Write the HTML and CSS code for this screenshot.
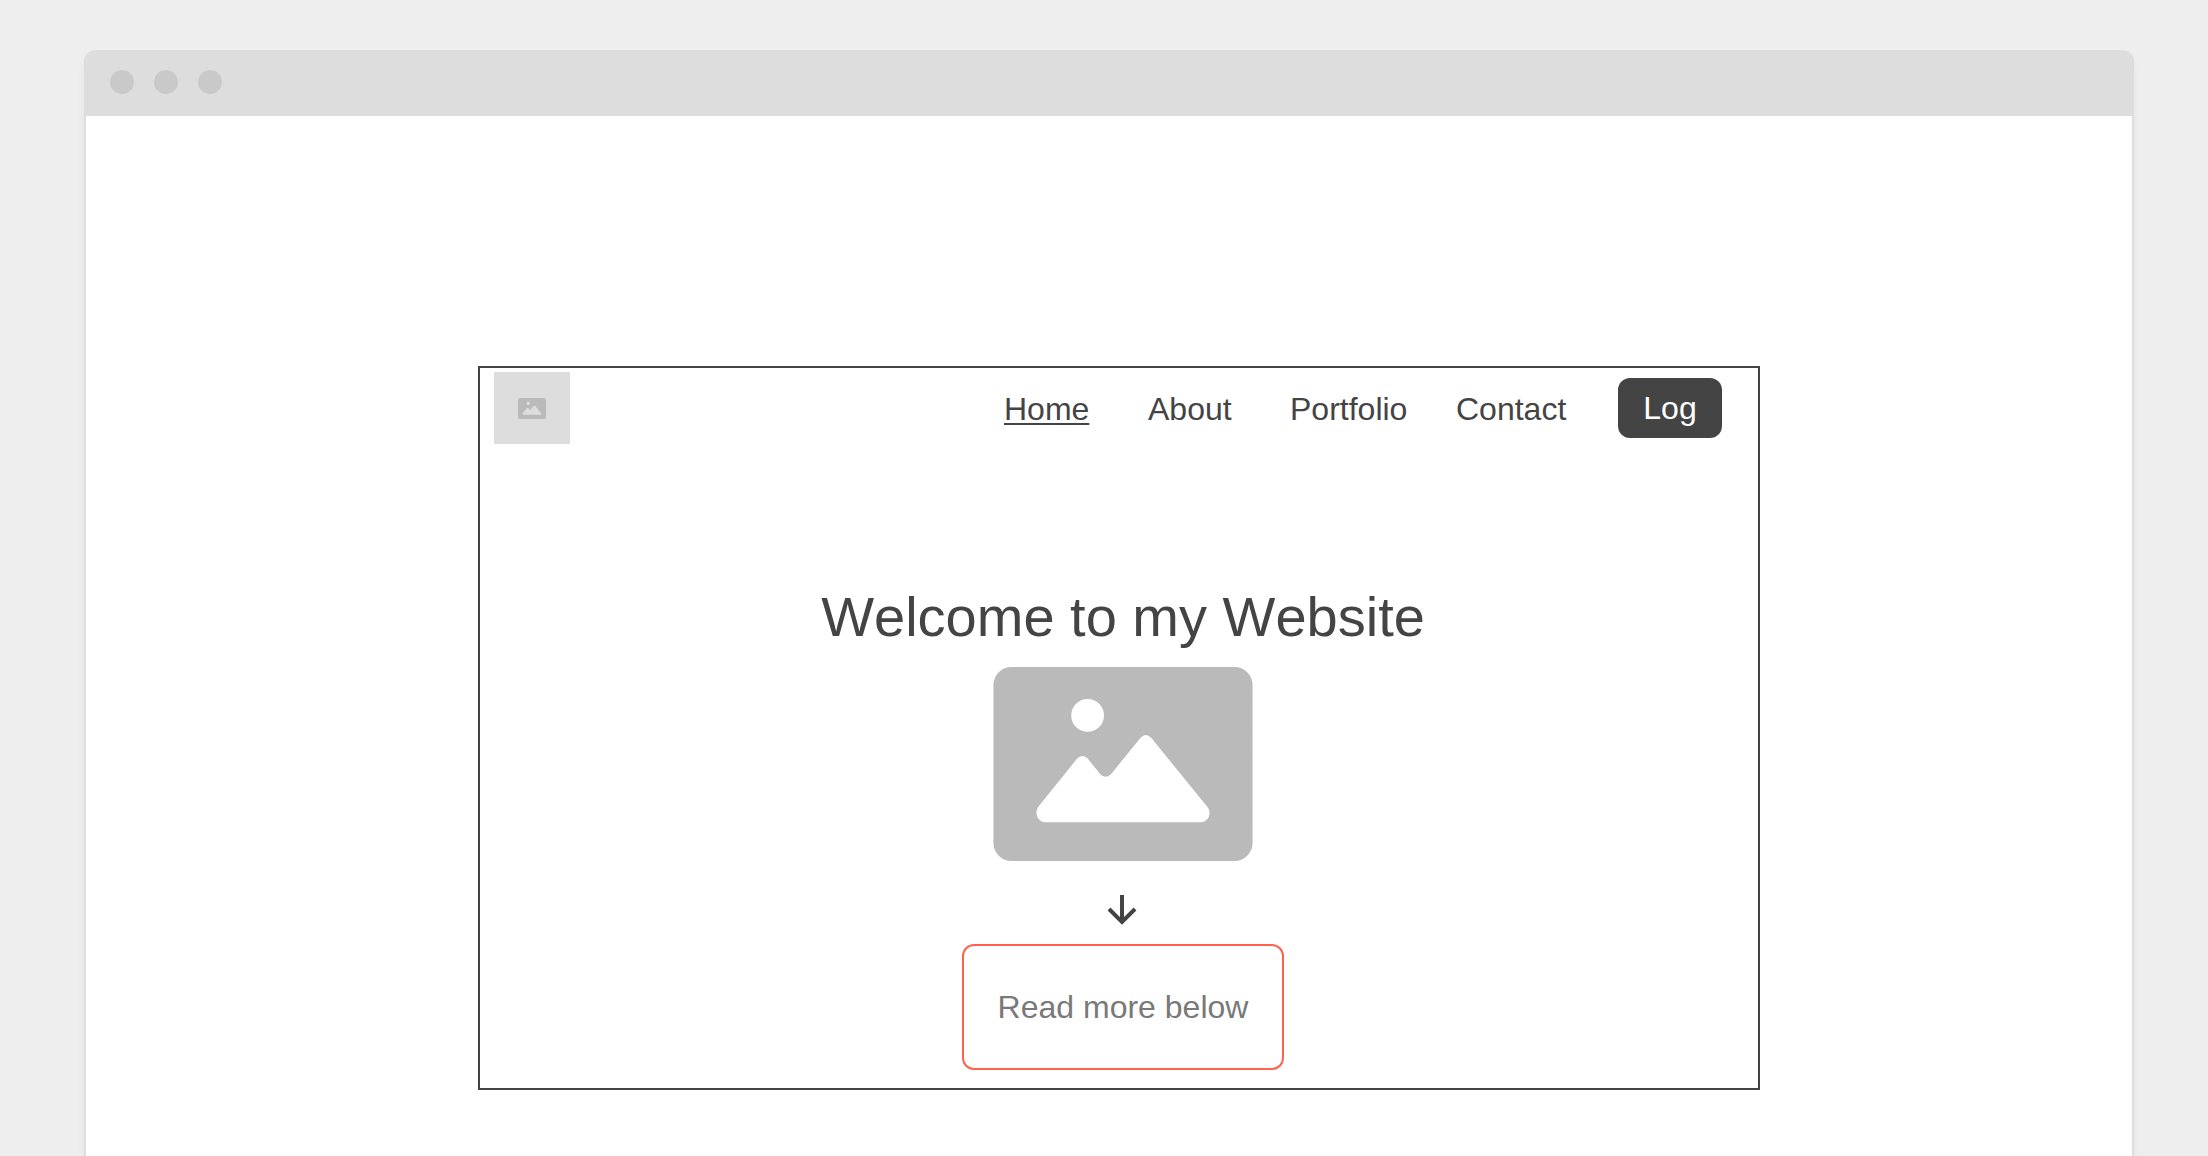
FILE: index.html
```html
<!DOCTYPE html>
<html lang="en">
<head>
<meta charset="utf-8">
<meta name="viewport" content="width=device-width, initial-scale=1">
<title>Welcome to my Website</title>
<link rel="stylesheet" href="styles.css">
</head>
<body>
<svg class="sprite" aria-hidden="true">
  <symbol id="picture" viewBox="0 0 776 581">
    <path fill-rule="evenodd" d="M54 0H722A54 54 0 0 1 776 54V527A54 54 0 0 1 722 581H54A54 54 0 0 1 0 527V54A54 54 0 0 1 54 0ZM282 96a49 49 0 1 0 0 98a49 49 0 1 0 0-98ZM158 465H620C644 465 655 438 641 419L473 213Q456 195 440 213L352 321Q336 337 320 321L283 275Q266 258 250 275L135 418C120 440 134 465 158 465Z"/>
  </symbol>
</svg>
<div class="window">
  <div class="titlebar">
    <span class="dot"></span>
    <span class="dot"></span>
    <span class="dot"></span>
  </div>
  <div class="page">
    <div class="frame">
      <header class="header">
        <div class="logo"><svg class="logo-icon" role="img" aria-label="Logo"><use href="#picture"/></svg></div>
        <nav class="nav">
          <a class="link current" href="#">Home</a>
          <a class="link" href="#">About</a>
          <a class="link" href="#">Portfolio</a>
          <a class="link" href="#">Contact</a>
          <button class="login" type="button">Log</button>
        </nav>
      </header>
      <main class="hero">
        <h1 class="title">Welcome to my Website</h1>
        <svg class="picture" role="img" aria-label="Picture"><use href="#picture"/></svg>
        <svg class="arrow" viewBox="0 0 30 30" aria-hidden="true"><path d="M14 0V27M1 14L14 27L27 14"/></svg>
        <button class="more" type="button">Read more below</button>
      </main>
    </div>
  </div>
</div>
</body>
</html>
```
FILE: styles.css
```css
* {
  box-sizing: border-box;
}

body {
  display: flex;
  flex-direction: column;
  min-height: 100vh;
  margin: 0;
  padding: 50px 74px 0 84px;
  background: #eee;
  color: #444;
  font-family: "Liberation Sans", Arial, sans-serif;
  font-size: 32px;
  line-height: 36px;
  font-kerning: none;
}

.sprite {
  position: absolute;
  width: 0;
  height: 0;
}

.window {
  display: flex;
  flex: 1;
  flex-direction: column;
  border: 2px solid #ddd;
  border-width: 0 2px;
  border-radius: 12px 12px 0 0;
  background: #fff;
  box-shadow: 0 6px 8px rgba(0, 0, 0, 0.04);
}

.titlebar {
  display: flex;
  gap: 20px;
  margin: 0 -2px;
  padding: 20px 26px 22px;
  border-radius: 12px 12px 0 0;
  background: #ddd;
}

.dot {
  width: 24px;
  height: 24px;
  border-radius: 50%;
  background: #c9c9c9;
}

.page {
  flex: 1;
  padding: 250px 372px 66px 392px;
}

.frame {
  border: 2px solid #444;
}

.header {
  display: flex;
  align-items: center;
  justify-content: space-between;
  padding: 4px 36px 0 14px;
}

.logo {
  display: flex;
  align-items: center;
  justify-content: center;
  width: 76px;
  height: 72px;
  background: #ddd;
}

.logo-icon {
  width: 28px;
  height: 21px;
  fill: #bababa;
}

.nav {
  display: grid;
  grid-template-columns: 144px 142px 166px 162px 104px;
  align-items: center;
}

.link {
  padding-top: 2px;
  color: inherit;
  text-decoration: none;
}

.current {
  text-decoration: underline;
  text-decoration-thickness: 2px;
  text-underline-offset: 3px;
  text-decoration-skip-ink: none;
}

.login {
  height: 60px;
  padding: 0;
  border: 0;
  border-radius: 12px;
  background: #444;
  color: #fff;
  font: inherit;
}

.hero {
  display: flex;
  flex-direction: column;
  align-items: center;
  padding: 140px 0 18px 8px;
}

.title {
  margin: 0 0 17px;
  font-size: 56px;
  font-weight: 400;
  line-height: 66px;
}

.picture {
  width: 260px;
  height: 194px;
  fill: #bababa;
}

.arrow {
  width: 30px;
  height: 30px;
  margin: 34px 0 19px;
  overflow: visible;
  fill: none;
  stroke: #444;
  stroke-width: 4;
}

.more {
  width: 322px;
  height: 126px;
  padding: 0;
  border: 2px solid #ff6350;
  border-radius: 12px;
  background: #fff;
  color: #797979;
  font: inherit;
}
```
